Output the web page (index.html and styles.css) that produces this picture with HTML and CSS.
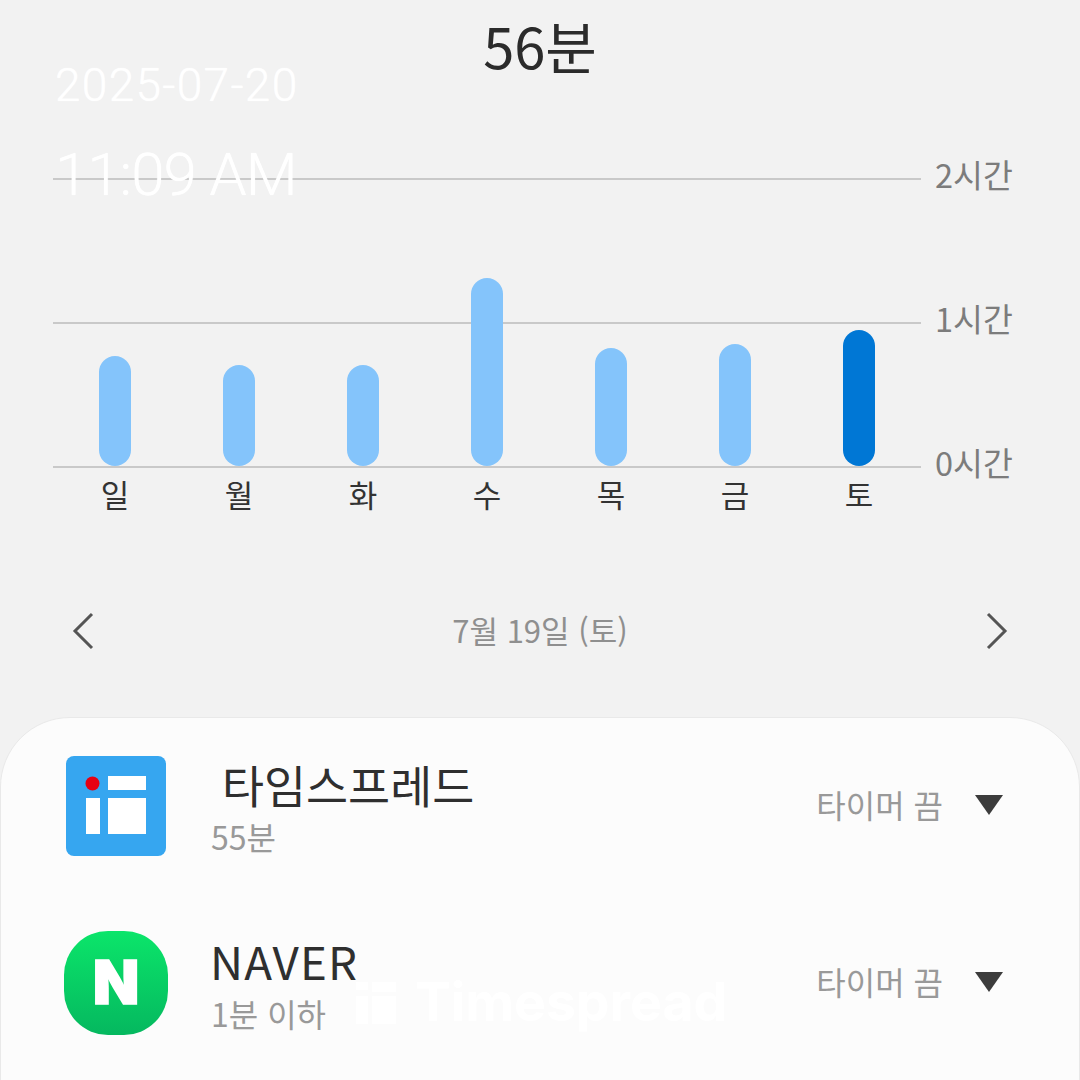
FILE: index.html
```html
<!DOCTYPE html>
<html lang="ko">
<head>
  <meta charset="utf-8">
  <title>Screen time</title>
  <link rel="stylesheet" href="styles.css">
</head>
<body>
  <h1 class="total">56분</h1>

  <section class="chart">
    <div class="scale">
      <div class="scale-row"><div class="scale-line"></div><span class="scale-label">2시간</span></div>
      <div class="scale-row"><div class="scale-line"></div><span class="scale-label">1시간</span></div>
      <div class="scale-row"><div class="scale-line"></div><span class="scale-label">0시간</span></div>
    </div>
    <div class="bars">
      <div class="bar" style="height:110px"></div>
      <div class="bar" style="height:101px"></div>
      <div class="bar" style="height:101px"></div>
      <div class="bar" style="height:188px"></div>
      <div class="bar" style="height:118px"></div>
      <div class="bar" style="height:122px"></div>
      <div class="bar bar-active" style="height:136px"></div>
    </div>
    <div class="days">
      <span>일</span><span>월</span><span>화</span><span>수</span><span>목</span><span>금</span><span>토</span>
    </div>
  </section>

  <nav class="date-nav">
    <svg class="chevron" viewBox="0 0 22 38"><path d="M20 2 3 19l17 17"/></svg>
    <span class="date-label">7월 19일 (토)</span>
    <svg class="chevron" viewBox="0 0 22 38"><path d="M2 2l17 17L2 36"/></svg>
  </nav>

  <section class="card">
    <div class="app-row">
      <svg class="app-icon" viewBox="0 0 100 100">
        <rect width="100" height="100" rx="8" fill="#36a6f0"/>
        <rect x="42" y="20" width="38" height="14" fill="#fff"/>
        <rect x="42" y="42" width="38" height="36" fill="#fff"/>
        <rect x="20" y="42" width="14" height="36" fill="#fff"/>
        <circle cx="26.500" cy="27.500" r="7" fill="#e60012"/>
      </svg>
      <div class="app-text">
        <div class="app-name app-name-spaced">타임스프레드</div>
        <div class="app-time">55분</div>
      </div>
      <span class="timer">타이머 끔</span>
      <svg class="caret" viewBox="0 0 28 20"><path d="M0 0h28L14 20z"/></svg>
    </div>

    <div class="app-row">
      <svg class="app-icon app-icon-naver" viewBox="0 0 104 104">
        <defs>
          <linearGradient id="naver-green" x1="0" y1="0" x2="0" y2="1">
            <stop offset="0" stop-color="#0be56a"/>
            <stop offset="1" stop-color="#05b85f"/>
          </linearGradient>
        </defs>
        <rect width="104" height="104" rx="44" fill="url(#naver-green)"/>
        <text x="52" y="73" text-anchor="middle" class="naver-letter">N</text>
      </svg>
      <div class="app-text">
        <div class="app-name app-name-latin">NAVER</div>
        <div class="app-time">1분 이하</div>
      </div>
      <span class="timer">타이머 끔</span>
      <svg class="caret" viewBox="0 0 28 20"><path d="M0 0h28L14 20z"/></svg>
    </div>
  </section>

  <!-- camera stamp and watermark on top of the screen -->
  <div class="stamp">
    <div class="stamp-date">2025-07-20</div>
    <div class="stamp-time">11:09 AM</div>
  </div>
  <div class="watermark">
    <svg class="watermark-icon" viewBox="0 0 40 44">
      <rect x="0" y="2" width="12" height="8"/>
      <rect x="16" y="2" width="24" height="10"/>
      <rect x="0" y="16" width="12" height="28"/>
      <rect x="16" y="16" width="24" height="28"/>
    </svg>
    <span>Timespread</span>
  </div>
</body>
</html>
```

FILE: styles.css
```css
/* basic layout */
html, body {
  height: 1080px;
  overflow: hidden;
}

body {
  margin: 0;
  background-color: #f2f2f2;
  color: #2b2b2b;
  font-family: "Noto Sans CJK KR", "Noto Sans", sans-serif;
}

.total {
  margin: 0;
  height: 178px;
  font-size: 56px;
  font-weight: 400;
  line-height: 90px;
  text-align: center;
}

/* chart */
.chart {
  position: relative;
  margin-left: 53px;
  width: 975px;
}

.scale-row {
  display: flex;
  align-items: center;
  height: 2px;
  margin-bottom: 142px;
}

.scale-row:last-child {
  margin-bottom: 0;
}

.scale-line {
  width: 868px;
  height: 2px;
  background-color: #c9c9c9;
}

.scale-label {
  margin-left: 14px;
  margin-bottom: 10px;
  font-size: 32.500px;
  line-height: 40px;
  color: #7c7c7c;
}

.bars {
  position: absolute;
  left: 0;
  top: 0;
  width: 868px;
  height: 288px;
  display: grid;
  grid-template-columns: repeat(7, 1fr);
  justify-items: center;
  align-items: end;
}

.bar {
  width: 32px;
  border-radius: 16px;
  background-color: #84c4fb;
}

.bar-active {
  background-color: #0077d5;
}

.days {
  width: 868px;
  display: grid;
  grid-template-columns: repeat(7, 1fr);
  justify-items: center;
  font-size: 31px;
  line-height: 52px;
  color: #333;
}

/* date switcher */
.date-nav {
  display: flex;
  align-items: center;
  justify-content: space-between;
  height: 40px;
  margin-top: 91px;
  padding: 0 72px;
}

.chevron {
  width: 22px;
  height: 38px;
  fill: none;
  stroke: #555;
  stroke-width: 3;
}

.date-label {
  margin-bottom: 4px;
  font-size: 31px;
  color: #8f8f8f;
}

/* app list */
.card {
  margin-top: 66px;
  height: 400px;
  box-sizing: border-box;
  padding: 38px 76px 0 64px;
  background-color: #fcfcfc;
  border: 1px solid #e9e9e9;
  border-radius: 70px 70px 0 0;
}

.app-row {
  display: flex;
  align-items: center;
  height: 100px;
  margin-bottom: 77px;
}

.app-icon {
  width: 100px;
  height: 100px;
  margin-left: 1px;
  flex-shrink: 0;
}

.app-icon-naver {
  width: 104px;
  height: 104px;
  margin-left: -1px;
  margin-right: -2px;
}

.naver-letter {
  fill: #fff;
  stroke: #fff;
  stroke-width: 1.500px;
  font-family: "Inter", sans-serif;
  font-size: 60px;
  font-weight: 900;
}

.app-text {
  flex: 1;
  margin-left: 45px;
}

.app-name {
  padding-bottom: 1px;
  font-size: 45.700px;
  line-height: 58px;
  color: #2f2f2f;
}

.app-name-spaced {
  margin: -2px 0 2px;
  padding-left: 11px;
}

.app-name-latin {
  margin: -3px 0 3px -1px;
  letter-spacing: 1.200px;
}

.app-time {
  font-size: 32px;
  line-height: 40px;
  color: #999;
}

.timer {
  margin-bottom: 4px;
  font-size: 32px;
  color: #999;
}

.caret {
  width: 28px;
  height: 20px;
  margin-left: 32px;
  margin-bottom: 2px;
  fill: #3c3c3c;
}

/* overlays */
.stamp {
  position: absolute;
  left: 55px;
  top: 54px;
  color: #fff;
  font-family: "Roboto", sans-serif;
  font-weight: 300;
  text-shadow: 0 0 1px #fff;
}

.stamp-date {
  font-size: 46px;
  letter-spacing: 1.300px;
  line-height: 62px;
}

.stamp-time {
  margin-top: 17px;
  font-size: 60px;
  letter-spacing: -1px;
  line-height: 84px;
}

.watermark {
  position: absolute;
  left: 355px;
  top: 972px;
  display: flex;
  align-items: center;
  gap: 18px;
  color: #fff;
  font-family: "Inter", sans-serif;
  font-size: 53.500px;
  font-weight: 700;
  line-height: 60px;
}

.watermark-icon {
  width: 42px;
  height: 44px;
  fill: #fff;
}
```
